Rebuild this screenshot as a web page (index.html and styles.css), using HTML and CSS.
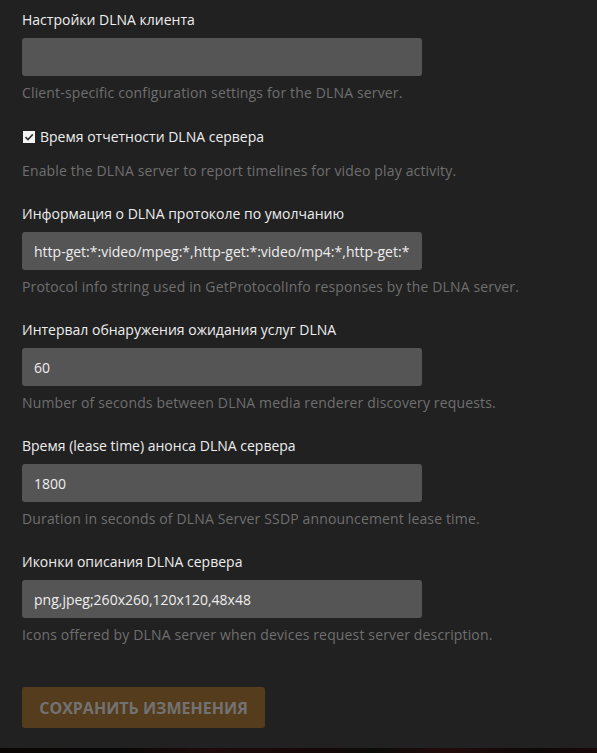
FILE: index.html
```html
<!DOCTYPE html>
<html lang="ru">
<head>
<meta charset="UTF-8">
<meta name="viewport" content="width=device-width, initial-scale=1.0">
<title>DLNA</title>
<link rel="stylesheet" href="styles.css">
</head>
<body>

<div class="page">
    <form class="settings">
        <div class="field first">
            <label class="field-label">Настройки DLNA клиента</label>
            <input class="field-input" type="text" value="">
            <p class="field-help">Client-specific configuration settings for the DLNA server.</p>
        </div>

        <div class="field">
            <label class="check-label">
                <svg class="check-box" width="12" height="12" viewBox="0 0 12 12">
                    <rect x="0" y="0" width="12" height="12" fill="#f4f4f4"/>
                    <path d="M2.5 6.2 L5 8.6 L9.8 3.4" fill="none" stroke="#333" stroke-width="1.6"/>
                </svg>
                Время отчетности DLNA сервера
            </label>
            <p class="field-help check-help">Enable the DLNA server to report timelines for video play activity.</p>
        </div>

        <div class="field">
            <label class="field-label">Информация о DLNA протоколе по умолчанию</label>
            <input class="field-input" type="text" value="http-get:*:video/mpeg:*,http-get:*:video/mp4:*,http-get:*:video/vnd.dlna.mpeg-tts:*">
            <p class="field-help">Protocol info string used in GetProtocolInfo responses by the DLNA server.</p>
        </div>

        <div class="field">
            <label class="field-label">Интервал обнаружения ожидания услуг DLNA</label>
            <input class="field-input" type="text" value="60">
            <p class="field-help">Number of seconds between DLNA media renderer discovery requests.</p>
        </div>

        <div class="field">
            <label class="field-label">Время (lease time) анонса DLNA сервера</label>
            <input class="field-input" type="text" value="1800">
            <p class="field-help">Duration in seconds of DLNA Server SSDP announcement lease time.</p>
        </div>

        <div class="field">
            <label class="field-label">Иконки описания DLNA сервера</label>
            <input class="field-input" type="text" value="png,jpeg;260x260,120x120,48x48">
            <p class="field-help">Icons offered by DLNA server when devices request server description.</p>
        </div>

        <button class="save-btn" type="submit" disabled>Сохранить изменения</button>
    </form>
    <div class="backdrop"></div>
</div>

</body>
</html>
```

FILE: styles.css
```css
body {
    margin: 0;
    padding: 0;
    background: #212121;
    font-family: "Open Sans", "Noto Sans", sans-serif;
    font-size: 14px;
}
.page {
    height: 753px;
    display: flex;
    flex-direction: column;
    overflow: hidden;
}
.settings {
    flex: 1;
    padding: 10px 22px 0;
}
.field {
    margin-bottom: 23px;
}
.field.first {
    margin-bottom: 24px;
}
.field-label,
.check-label {
    display: block;
    color: #eeeeee;
    line-height: 20px;
    margin-bottom: 8px;
}
.check-label {
    display: flex;
    align-items: center;
    gap: 5px;
    margin-bottom: 0;
    padding-left: 1px;
}
.check-box {
    flex: none;
}
.field-input {
    display: block;
    box-sizing: border-box;
    width: 400px;
    height: 38px;
    padding: 0 12px;
    border: none;
    border-radius: 3px;
    background: #555555;
    color: #eeeeee;
    font-family: inherit;
    font-size: 14px;
    outline: none;
}
.field-help {
    margin: 7px 0 0;
    line-height: 20px;
    color: #6f6f6f;
    letter-spacing: 0.15px;
}
.check-help {
    margin-top: 14px;
}
.save-btn {
    margin-top: 19px;
    width: 243px;
    height: 41px;
    border: none;
    border-radius: 3px;
    background: #553c1c;
    color: #727272;
    font-family: inherit;
    font-size: 16px;
    font-weight: 700;
    text-transform: uppercase;
    cursor: default;
}
.backdrop {
    height: 5px;
    background: linear-gradient(90deg, #0b0606 0%, #080808 20%, #1e0a0a 35%, #140808 55%, #0a0c08 62%, #220b0b 75%, #0d0808 90%, #1a0909 100%);
}
```
